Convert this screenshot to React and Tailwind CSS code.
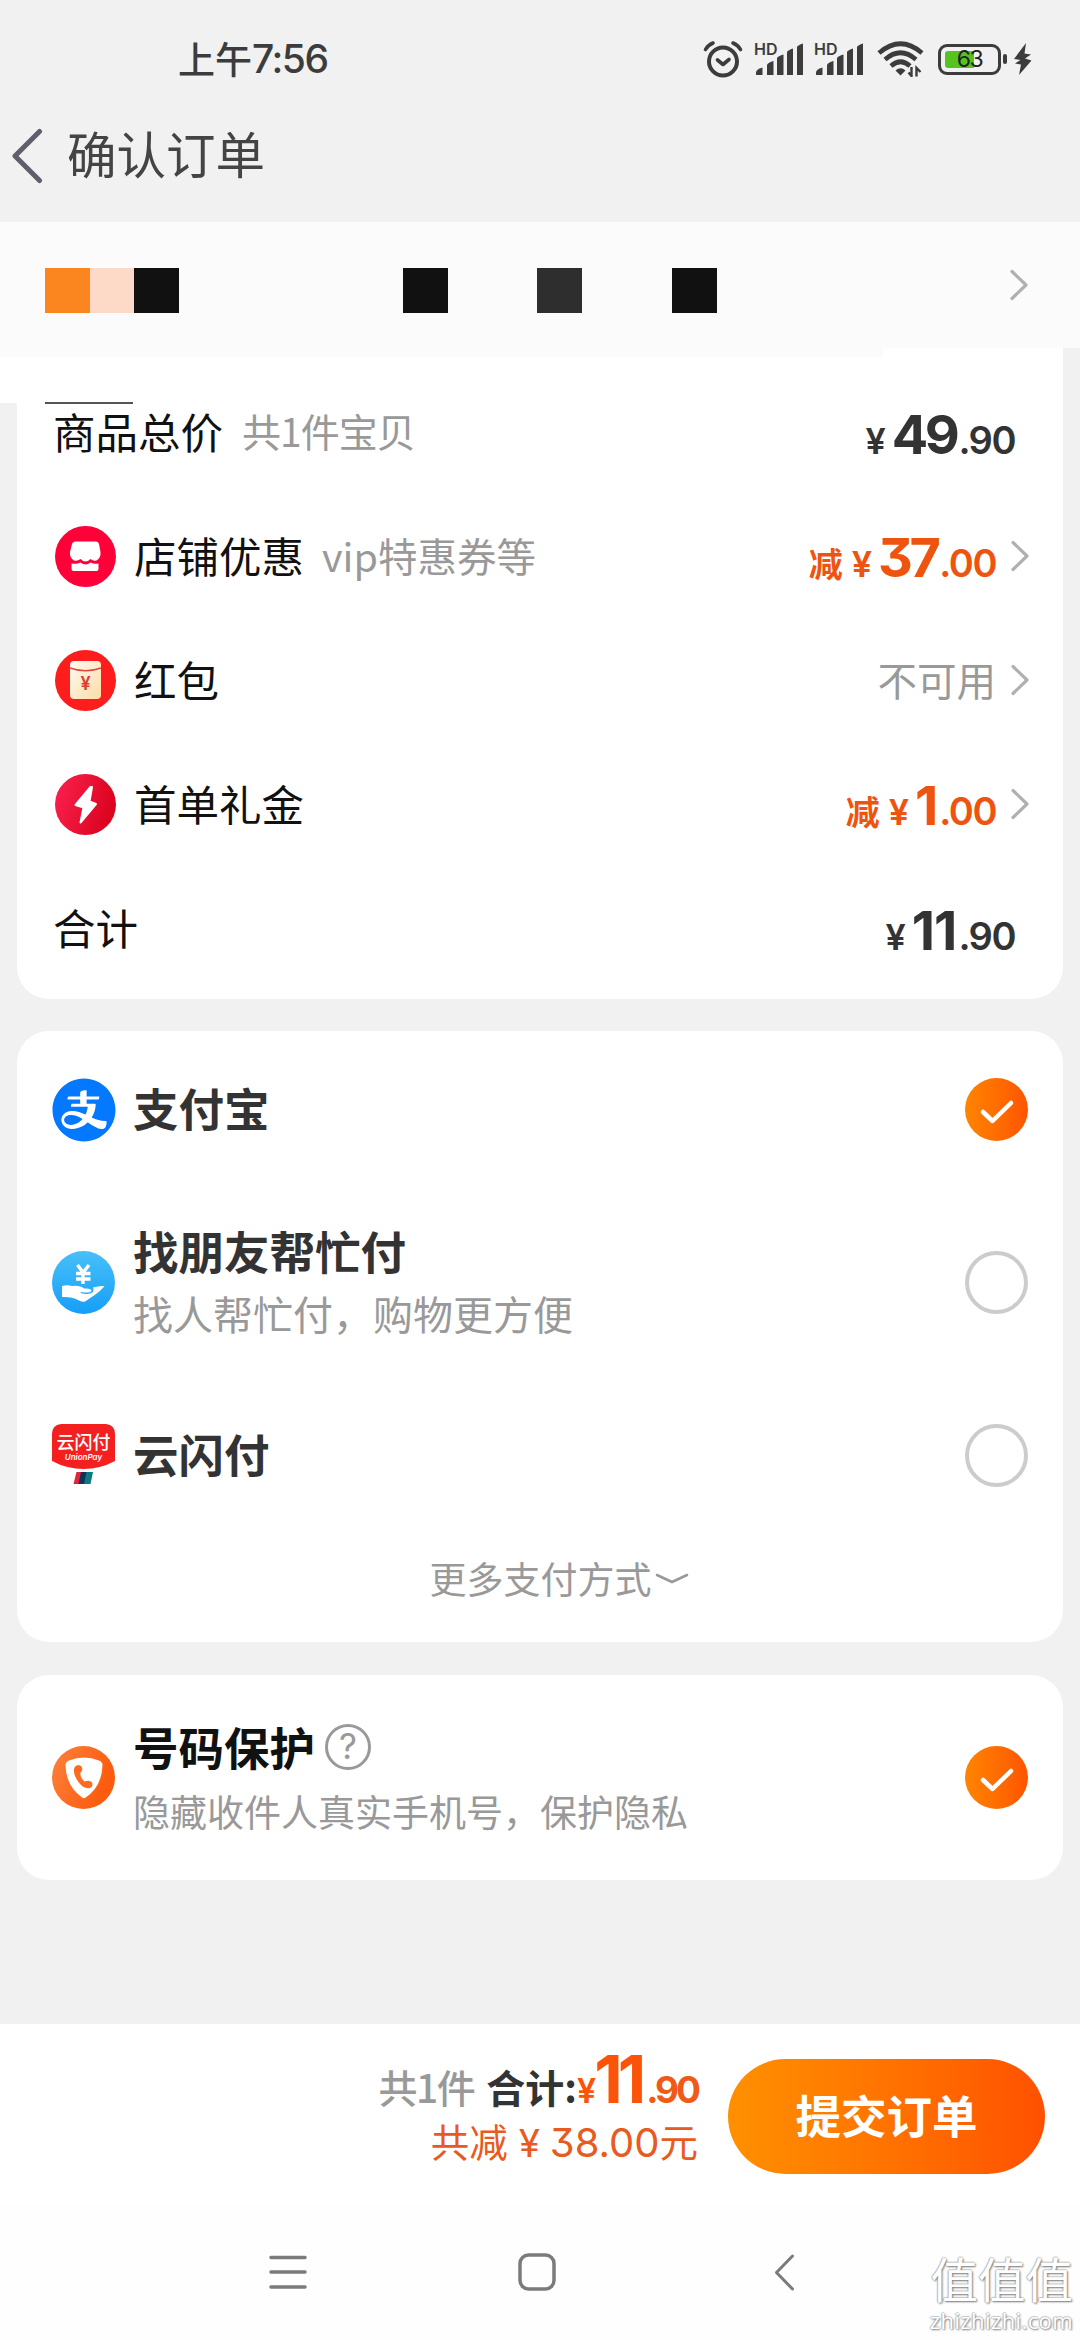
import { AiFillAlipayCircle } from 'react-icons/ai'

const discountRows = [
  { icon: 'shop', label: '店铺优惠', note: 'vip特惠券等', int: '37', dec: '.00' },
  { icon: 'packet', label: '红包', disabled: '不可用' },
  { icon: 'bolt', label: '首单礼金', int: '1', dec: '.00' },
]

function Chevron({ className = '' }) {
  return (
    <svg viewBox="0 0 18 32" className={`w-[18px] h-8 ${className}`} fill="none" stroke="#b0b0b0" strokeWidth="3.200" strokeLinecap="round" strokeLinejoin="round">
      <path d="M2 2.500 L16 16 L2 29.500" />
    </svg>
  )
}

function Signal() {
  return (
    <svg viewBox="0 0 51 34" className="w-[51px] h-[34px] overflow-visible" fill="#3c3c3c">
      <text x="0" y="13" fontSize="16" fontWeight="600" fontFamily="Inter, sans-serif">HD</text>
      <path d="M2 32.500 v-2 q0-3 6.500-5 v7 q0 .5-.5 .5 h-5.500 q-.5 0-.5-.5z" />
      <path d="M13 33 v-10 q1-2.500 6.500-4 v14z" />
      <path d="M23 33 v-17 q1-2 6.500-3.500 v20.500z" />
      <path d="M33 33 v-23 q1-2 6-3.500 v26.500z" />
      <path d="M43 33 v-28 q1-2 6-3.500 v31.500z" />
    </svg>
  )
}

function StatusBar() {
  return (
    <div className="h-[118px] flex items-center text-[#3c3c3c]">
      <div className="ml-[178px] w-[525px] text-[37px] leading-none font-medium flex items-center pb-[2px]">
        <span>上午</span>
        <span className="font-['Inter'] text-[39px] tracking-[-1.5px]">7:56</span>
      </div>
      {/* 闹钟 */}
      <svg viewBox="0 0 40 38" className="w-10 h-[38px] mr-[11px]" fill="none" stroke="#3c3c3c" strokeLinecap="round" strokeLinejoin="round">
        <circle cx="20" cy="21.500" r="14" strokeWidth="4" />
        <path d="M14.500 20 L20 24.500 L26 19.500" strokeWidth="3.600" />
        <path d="M2.500 9.500 Q5 5 10 3 M30 3 Q35 5 37.500 9.500" strokeWidth="3.600" />
      </svg>
      <Signal />
      <div className="w-[9px]" />
      <Signal />
      {/* wifi */}
      <svg viewBox="0 0 48 36" className="w-12 h-9 ml-[12px]" fill="none" stroke="#3c3c3c" strokeWidth="4.600">
        <path d="M2 12 Q23.500 -6.500 45 12" />
        <path d="M8 18.500 Q23.500 5 39 18.500" />
        <path d="M14 25 Q23.500 16.500 33 25" />
        <path d="M18.500 29.500 Q23.500 25 28.500 29.500 L23.500 34.500 Z" fill="#3c3c3c" stroke="none" />
        <path d="M34.500 26 V35 L31.500 31.500 M39.500 35.500 V27 L43.500 31" strokeWidth="2.400" />
      </svg>
      {/* 电池 */}
      <div className="ml-[13px] w-[63px] h-[31px] rounded-[9px] border-[3px] border-[#3c3c3c] p-1 relative">
        <div className="w-[29px] h-full rounded-l-[3px] bg-[#55c41f]" />
        <span className="absolute inset-0 flex items-center justify-center font-['Inter'] text-[23px] leading-none tracking-[-1.5px] text-[#222]">63</span>
      </div>
      <div className="ml-[2px] w-1 h-[10px] rounded-sm bg-[#3c3c3c]" />
      <svg viewBox="0 0 18 32" className="ml-[7px] w-[18px] h-8" fill="#3c3c3c">
        <path d="M12 0 L0 16 L6.500 17 L1 20.500 L7 21.500 L5 32 L17.500 17.500 L11 15.500 L17 11.500 L10.500 10.500 Z" />
      </svg>
    </div>
  )
}

function Price({ int, dec, red }) {
  // 数字1本身较窄，字距单独放宽
  const tracking = int.includes('1') ? 'tracking-[-1px]' : 'tracking-[-3.5px]'
  return (
    <div className={`flex items-baseline pt-[11px] font-['Inter','Noto_Sans_CJK_SC',sans-serif] leading-[60px] ${red ? 'text-[#ee5410]' : 'text-[#333]'}`}>
      {red && <span className="text-[34px] font-bold mr-[9px]">减</span>}
      <span className="text-[36px] font-semibold mr-[6px]">¥</span>
      <span className={`text-[54px] font-bold [font-feature-settings:'cv09'] ${tracking}`}>{int}</span>
      <span className="text-[38px] font-semibold tracking-[-1.5px] ml-[2px]">{dec}</span>
    </div>
  )
}

function RowIcon({ name }) {
  return (
    <svg viewBox="0 0 61 61" className="w-[61px] h-[61px] mr-[18px]">
      <defs>
        <linearGradient id="boltBg" x1="0" y1="0" x2="1" y2="0.300">
          <stop offset="0" stopColor="#fb2350" />
          <stop offset="1" stopColor="#dc0420" />
        </linearGradient>
        <linearGradient id="packetBg" x1="0" y1="0" x2="1" y2="1">
          <stop offset="0" stopColor="#fffaf0" />
          <stop offset="1" stopColor="#fbdca6" />
        </linearGradient>
      </defs>
      {name === 'shop' && (
        <>
          <circle cx="30.500" cy="30.500" r="30.500" fill="#ff0038" />
          <path d="M20 15.500 H41 Q43.500 15.500 44 18 L45.500 26 Q46 32 41.500 34.500 Q38 35.500 35.500 33 Q30.500 38 25.500 33 Q22.500 35.500 19 34.500 Q14.500 32 15 26 L17 18 Q17.500 15.500 20 15.500 Z" fill="#fff" />
          <path d="M16.500 37.500 Q22 38.500 25.500 36.500 Q30.500 40.500 35.500 36.500 Q39 38.500 43.500 37.500 V43 Q43.500 45 41.500 45 H18.500 Q16.500 45 16.500 43 Z" fill="#fff" />
        </>
      )}
      {name === 'packet' && (
        <>
          <circle cx="30.500" cy="30.500" r="30.500" fill="#fd1d1d" />
          <rect x="15" y="11" width="31" height="38" rx="4" fill="url(#packetBg)" />
          <path d="M15 18 Q30.500 23.500 46 18" fill="none" stroke="#e0463c" strokeWidth="1.500" />
          <text x="30.500" y="40" textAnchor="middle" fontSize="18" fontWeight="600" fontFamily="Inter, sans-serif" fill="#dd3c32">¥</text>
        </>
      )}
      {name === 'bolt' && (
        <>
          <circle cx="30.500" cy="30.500" r="30.500" fill="url(#boltBg)" />
          <path d="M35.500 13 L20.500 31 L28.500 33.500 L25.500 48.500 L41 30 L34.500 27.500 L37 13 Z" fill="#fff" stroke="#fff" strokeWidth="2" strokeLinejoin="round" />
        </>
      )}
    </svg>
  )
}

function Radio({ checked }) {
  if (!checked) return <div className="w-[63px] h-[63px] rounded-full border-4 border-[#ccc] shrink-0" />
  return (
    <div className="w-[63px] h-[63px] rounded-full bg-linear-to-r from-[#ff8400] to-[#ff5300] shrink-0">
      <svg viewBox="0 0 63 63" className="w-full h-full" fill="none" stroke="#fff" strokeWidth="4.500" strokeLinecap="round" strokeLinejoin="round">
        <path d="M18 34 L27.500 43 L46 25" />
      </svg>
    </div>
  )
}

function FriendPayIcon() {
  return (
    <svg viewBox="0 0 63 63" className="w-[63px] h-[63px]">
      <defs>
        <linearGradient id="friendBg" x1="0" y1="0" x2="0" y2="1">
          <stop offset="0" stopColor="#48c0f8" />
          <stop offset="1" stopColor="#159ef8" />
        </linearGradient>
      </defs>
      <circle cx="31.500" cy="31.500" r="31.500" fill="url(#friendBg)" />
      <path d="M25.500 14 L31 21.500 L37 14 M31 21.500 V33 M24 22.500 H38.500 M24 28 H38.500" fill="none" stroke="#fff" strokeWidth="3.400" />
      <path d="M10 35 Q15 33.500 20 35 Q28 34 32 37.500 Q40 37 39.500 40 Q38 42.500 29 41 L28.500 42 Q37 44.500 41 41 Q42 38 41 36.500 Q47 34.500 52.500 35 Q48 41 42 44.500 L33 50.500 Q30 51.500 26 49 Q20 45.500 10 46 Z" fill="#fff" />
    </svg>
  )
}

function UnionPayIcon() {
  return (
    <svg viewBox="0 0 63 63" className="w-[63px] h-[63px]">
      <path d="M9 0 H54 Q63 1 63 10 V37 Q48 45 31.500 45 Q15 45 0 37 V10 Q0 1 9 0 Z" fill="#f4201f" />
      <text x="31.500" y="25" textAnchor="middle" fontSize="18" fontWeight="500" fontFamily="'Noto Sans CJK SC', sans-serif" fill="#fff">云闪付</text>
      <text x="31.500" y="36" textAnchor="middle" fontSize="8" fontStyle="italic" fontWeight="600" fontFamily="Inter, sans-serif" fill="#fff">UnionPay</text>
      <path d="M24.500 48 H31 L28 60 H21.500 Z" fill="#e0243c" />
      <path d="M29 48 H35.500 L33 60 H26.500 Z" fill="#14315c" />
      <path d="M34.500 48 H41 L38.500 60 H32 Z" fill="#0b7a80" />
    </svg>
  )
}

function PhoneShieldIcon() {
  return (
    <svg viewBox="0 0 63 63" className="w-[63px] h-[63px]">
      <defs>
        <linearGradient id="shieldBg" x1="0" y1="0" x2="1" y2="0.400">
          <stop offset="0" stopColor="#fd813c" />
          <stop offset="1" stopColor="#fc5a0c" />
        </linearGradient>
      </defs>
      <circle cx="31.500" cy="31.500" r="31.500" fill="url(#shieldBg)" />
      <path d="M17 14.500 Q32 8.500 47 14.500 Q50.500 16 50.500 19 Q50 41 33 52 Q31.500 52.500 30 51.500 Q14 40 13.500 19 Q13.500 16 17 14.500 Z" fill="#fff" />
      <path d="M23 20.500 Q26.500 17.500 29.500 20.500 Q31.500 24 28.500 26.500 Q27.500 31 32.500 35.500 Q37.500 33.500 40 36.500 Q41.500 40.500 38 42 Q32 43.500 26.500 36 Q19.500 27 23 20.500 Z" fill="#fd6a20" />
    </svg>
  )
}

function App() {
  return (
    <div className="w-[1080px] h-[2340px] overflow-hidden bg-[#f1f1f1] font-['Noto_Sans_CJK_SC',sans-serif] flex flex-col relative">
      <StatusBar />

      {/* 标题栏 */}
      <div className="h-[104px] flex items-start pt-[10px]">
        <svg viewBox="0 0 32 56" className="ml-[11px] w-8 h-14" fill="none" stroke="#5f5f6b" strokeWidth="5" strokeLinecap="round" strokeLinejoin="round">
          <path d="M28.500 3.500 L4 28 L28.500 52.500" />
        </svg>
        <h1 className="ml-[24px] text-[49.5px] leading-[50px] text-[#444]">确认订单</h1>
      </div>

      {/* 收货地址 */}
      <div className="h-[126px] bg-[#fbfbfb] flex items-start pl-[45px]">
        <div className="flex mt-[46px]">
          <div className="w-[45px] h-[45px] bg-[#fb851e]" />
          <div className="w-[44px] h-[45px] bg-[#fdd9c8]" />
          <div className="w-[45px] h-[45px] bg-[#111]" />
          <div className="w-[45px] h-[45px] bg-[#111] ml-[224px]" />
          <div className="w-[45px] h-[45px] bg-[#2e2e2e] ml-[89px]" />
          <div className="w-[45px] h-[45px] bg-[#111] ml-[90px]" />
        </div>
        <Chevron className="ml-[293px] mt-[47px]" />
      </div>

      {/* 价格明细 */}
      <div className="relative">
        <div className="mx-[17px] h-[651px] bg-white rounded-b-[32px] pt-[22px] pl-[38px] pr-[34px]">
          <div className="h-[124px] flex items-center">
            <span className="text-[42.5px] text-[#111] -ml-[2px] pb-[3px]">商品总价</span>
            <span className="text-[39px] tracking-[-1px] text-[#999] ml-[19px] pb-[3px] flex-1">共1件宝贝</span>
            <div className="mr-[14px]"><Price int="49" dec=".90" /></div>
          </div>
          {discountRows.map((row) => (
            <div key={row.icon} className="h-[124px] flex items-center">
              <RowIcon name={row.icon} />
              <span className="text-[42.5px] text-[#111] pb-[3px]">{row.label}</span>
              <span className="text-[39.5px] text-[#999] ml-[18px] pb-[3px] flex-1">{row.note}</span>
              {row.disabled
                ? <span className="text-[39.5px] text-[#999] pb-[3px]">{row.disabled}</span>
                : <Price int={row.int} dec={row.dec} red />}
              <Chevron className="ml-[15px]" />
            </div>
          ))}
          <div className="h-[124px] flex items-center justify-between">
            <span className="text-[42.5px] text-[#111] -ml-[2px] pb-[3px]">合计</span>
            <div className="mr-[14px]"><Price int="11" dec=".90" /></div>
          </div>
        </div>
        <div className="absolute left-0 top-0 w-[883px] h-[9px] bg-[#fbfbfb]" />
        <div className="absolute left-0 top-[9px] w-[18px] h-[46px] bg-white" />
        <div className="absolute left-[45px] top-[54px] w-[88px] h-[2px] bg-[#555]" />
      </div>

      {/* 支付方式 */}
      <div className="mx-[17px] mt-[32px] h-[611px] bg-white rounded-[32px] px-[35px] text-[#333]">
        <div className="h-[157px] flex items-center">
          <div className="w-[63px] h-[63px] flex items-center justify-center">
            <AiFillAlipayCircle className="w-[72px] h-[72px] shrink-0 text-[#0478ff]" />
          </div>
          <span className="ml-[18px] pb-[4px] flex-1 text-[45.5px] font-bold">支付宝</span>
          <Radio checked />
        </div>
        <div className="h-[188px] flex items-center">
          <FriendPayIcon />
          <div className="ml-[18px] pb-[2px] flex-1">
            <p className="text-[45.5px] leading-[64px] font-bold">找朋友帮忙付</p>
            <p className="text-[40px] leading-[62px] text-[#999]">找人帮忙付，购物更方便</p>
          </div>
          <Radio />
        </div>
        <div className="h-[158px] flex items-center">
          <UnionPayIcon />
          <span className="ml-[18px] pb-[4px] flex-1 text-[45.5px] font-bold">云闪付</span>
          <Radio />
        </div>
        <div className="h-[89px] pl-[38px] flex items-center justify-center text-[37px] text-[#999]">
          更多支付方式
          <svg viewBox="0 0 34 12" className="w-[34px] h-3 ml-[3px]" fill="none" stroke="#999" strokeWidth="2.500" strokeLinecap="round">
            <path d="M2 2 L17 9 L32 2" />
          </svg>
        </div>
      </div>

      {/* 号码保护 */}
      <div className="mx-[17px] mt-[33px] h-[205px] bg-white rounded-[32px] px-[35px] flex items-center">
        <PhoneShieldIcon />
        <div className="ml-[18px] pb-[2px] flex-1">
          <div className="flex items-center h-[68px]">
            <span className="text-[45.5px] font-bold text-[#111] pb-[1px]">号码保护</span>
            <div className="ml-[10px] w-[46px] h-[46px] rounded-full border-[3px] border-[#999] text-[#999] font-['Inter'] text-[35px] leading-none flex items-center justify-center">?</div>
          </div>
          <p className="text-[37px] leading-[60px] text-[#999]">隐藏收件人真实手机号，保护隐私</p>
        </div>
        <Radio checked />
      </div>

      {/* 底部提交栏 */}
      <div className="mt-[144px] h-[180px] bg-white flex items-start justify-end pr-[35px]">
        <div className="flex flex-col items-end mt-[22px]">
          <div className="flex items-baseline h-[65px] leading-[66px] text-[40px]">
            <span className="text-[#999] font-medium text-[39px] tracking-[-1.5px]">共1件</span>
            <span className="text-[#333] font-bold text-[39px] ml-[12px]">合计:</span>
            <span className="font-['Inter'] text-[#fb5408] font-semibold text-[34px] tracking-[-2px]">¥</span>
            <span className="font-['Inter'] text-[#fb5408] font-bold text-[66px] tracking-[-5px]">11</span>
            <span className="font-['Inter'] text-[#ee5a18] font-bold text-[37px] tracking-[-3px] ml-[5px]">.90</span>
          </div>
          <div className="flex items-baseline h-[60px] leading-[58px] text-[38.5px] text-[#e85a20]">
            <span>共减</span>
            <span className="font-['Inter'] ml-[11px]">¥</span>
            <span className="font-['Inter'] text-[40px] ml-[10px] [font-feature-settings:'cv09']">38.00</span>
            <span>元</span>
          </div>
        </div>
        <button className="ml-[30px] mt-[35px] w-[317px] h-[115px] pb-[4px] rounded-full bg-linear-to-r from-[#ff9000] to-[#ff5000] text-white text-[45.5px] font-bold">提交订单</button>
      </div>

      {/* 系统导航键 */}
      <div className="flex-1 bg-[#fefefe] flex items-start pt-[47px]">
        <svg viewBox="0 0 38 42" className="ml-[269px] w-[38px] h-[42px]" stroke="#7b7b7b" strokeWidth="3.500" strokeLinecap="round">
          <path d="M2 6.500 H36 M2 21 H36 M2 36 H36" />
        </svg>
        <svg viewBox="0 0 38 42" className="ml-[211px] w-[38px] h-[42px]" fill="none" stroke="#7b7b7b" strokeWidth="3.500">
          <rect x="2" y="4" width="34" height="34" rx="8.500" />
        </svg>
        <svg viewBox="0 0 22 42" className="ml-[218px] w-[22px] h-[42px]" fill="none" stroke="#7b7b7b" strokeWidth="3" strokeLinecap="round" strokeLinejoin="round">
          <path d="M18.500 5 L2.500 21.500 L18.500 38" />
        </svg>
      </div>

      {/* 水印 */}
      <div className="absolute right-[7px] bottom-[6px] flex flex-col items-end text-white [text-shadow:1px_1px_2px_#777,-1px_0_1px_#bbb,0_-1px_1px_#ccc]">
        <span className="text-[47.5px] leading-[56px]">值值值</span>
        <span className="font-['Open_Sans'] text-[22px] leading-[28px] tracking-[0.4px]">zhizhizhi.com</span>
      </div>
    </div>
  )
}

export default App
